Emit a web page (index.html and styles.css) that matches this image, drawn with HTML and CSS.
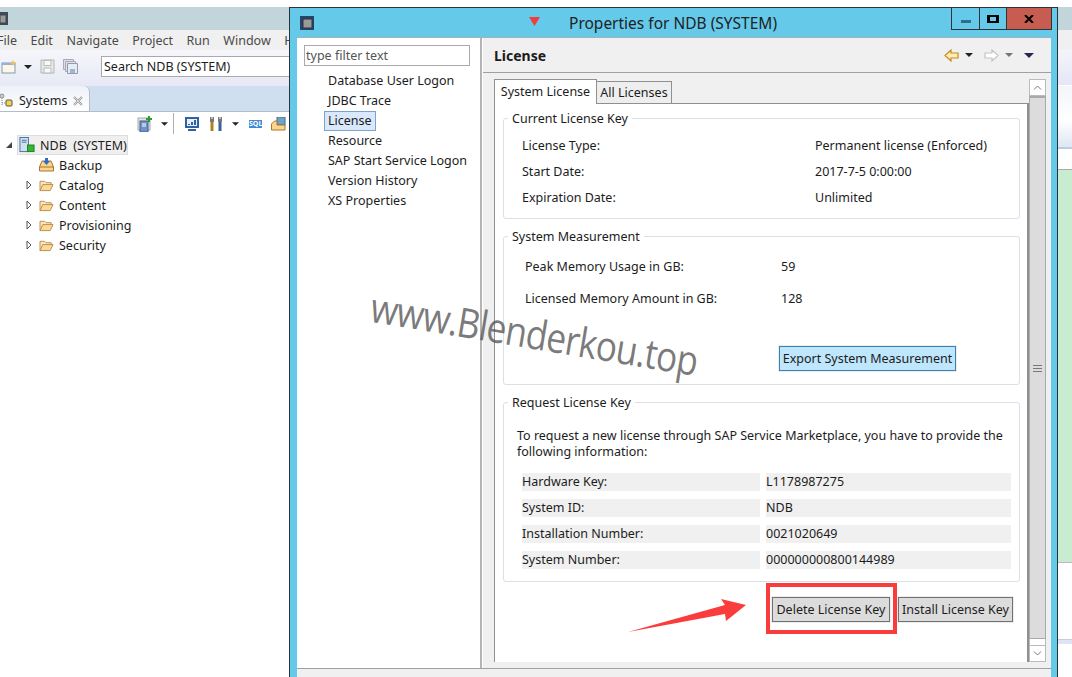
FILE: index.html
```html
<!DOCTYPE html>
<html lang="en">
<head>
    <meta charset="UTF-8">
    <title>Properties for NDB (SYSTEM)</title>
    <link rel="stylesheet" href="styles.css">
</head>
<body>
    <!-- Общие иконки -->
    <svg class="defs" width="0" height="0">
        <symbol id="folder" viewBox="0 0 16 14">
            <path d="M1 12.500V2.500h5l1.500 1.500H13v2" fill="#fbe6bd" stroke="#b98a45"/>
            <path d="M1 12.500L4 6h11l-3 6.500z" fill="#fcd999" stroke="#b98a45"/>
        </symbol>
        <symbol id="closed" viewBox="0 0 6 10">
            <path d="M1 1l4 4-4 4z" fill="#fff" stroke="#555"/>
        </symbol>
        <symbol id="drop" viewBox="0 0 8 4">
            <path d="M0 0h8L4 4z" fill="#222"/>
        </symbol>
    </svg>

    <div class="desktop">
        <!-- Главное окно слева -->
        <div class="studio">
            <div class="studio-title">
                <svg class="app-icon" width="8" height="13" viewBox="0 0 8 13"><rect width="8" height="13" fill="#3c4a5c"/><rect x="0" y="3" width="6" height="8" fill="#9a9a9a" stroke="#444"/></svg>
            </div>
            <div class="menu">
                <span>File</span><span>Edit</span><span>Navigate</span><span>Project</span><span>Run</span><span>Window</span><span>Help</span>
            </div>
            <div class="toolbar">
                <svg class="tool-new" width="16" height="14" viewBox="0 0 16 14"><rect x="1" y="3" width="13" height="10" fill="#fdf6e0" stroke="#7d9cc0"/><rect x="1" y="3" width="13" height="2" fill="#8fb3dc"/><path d="M12 0l1 2 2 1-2 1-1 2-1-2-2-1 2-1z" fill="#f2c14e"/></svg>
                <svg class="tool-drop" width="8" height="4"><use href="#drop"/></svg>
                <svg class="tool-save" width="15" height="15" viewBox="0 0 15 15"><path d="M1 1h13v13H1z" fill="#e8e8e8" stroke="#b5b5b5"/><path d="M4 1.500h7v5H4zM4 9h7v5H4z" fill="#f8f8f8" stroke="#bbb"/></svg>
                <svg class="tool-saveall" width="15" height="15" viewBox="0 0 15 15"><path d="M.5.500h10v10H.5z" fill="#dde" stroke="#aab"/><path d="M2.500 2.500h10v10h-10z" fill="#dde" stroke="#aab"/><path d="M4.500 4.500h10v10h-10z" fill="#e6ecf4" stroke="#99a"/><path d="M7 10h5v4H7z" fill="#9fb6d3"/></svg>
                <span class="tool-grip"></span>
                <span class="tool-dot"></span>
                <div class="search">Search NDB (SYSTEM)</div>
            </div>
            <div class="view-tabs">
                <div class="view-tab">
                    <svg width="13" height="15" viewBox="0 0 13 15"><circle cx="2" cy="3" r="2" fill="#ccc" stroke="#777" stroke-width=".7"/><path d="M2 5v8M2 10h4" stroke="#888" stroke-dasharray="1 1"/><rect x="6" y="7" width="6" height="6" rx="1" fill="#f3d34a" stroke="#555"/></svg>
                    <span class="view-name">Systems</span>
                    <svg class="view-close" width="10" height="10" viewBox="0 0 10 10"><path d="M1 1l8 8M9 1L1 9" stroke="#999" stroke-width="2"/><path d="M1 1l8 8M9 1L1 9" stroke="#fff" stroke-width=".6"/></svg>
                </div>
            </div>
            <div class="view-tools">
                <svg class="vt-add" width="16" height="16" viewBox="0 0 16 16"><rect x="1" y="2" width="12" height="12" fill="#e8e4da" stroke="#aaa"/><rect x="3" y="5" width="8" height="11" fill="#6f93c4" stroke="#3c5f95"/><path d="M5 8h4M5 10h4" stroke="#fff"/><path d="M12 0v6M9 3h6" stroke="#2c9b34" stroke-width="2"/></svg>
                <svg class="vt-drop" width="7" height="4"><use href="#drop"/></svg>
                <span class="vt-sep"></span>
                <svg class="vt-monitor" width="14" height="14" viewBox="0 0 14 14"><rect x="0" y="0" width="14" height="11" fill="#2d62a3"/><rect x="2" y="2" width="10" height="7" fill="#e8f0fa"/><path d="M4 8V7M7 8V5M10 8V3" stroke="#2d62a3" stroke-width="2"/><path d="M3 13h8" stroke="#2d62a3" stroke-width="2"/></svg>
                <svg class="vt-tools" width="18" height="14" viewBox="0 0 18 14"><path d="M1 0h1.500v2h1V0H5v5H1zM9 0h1.500v2h1V0H13v5H9z" fill="#777"/><path d="M1.500 5h3v9h-3z" fill="#ae8020"/><path d="M9.500 5h3v9h-3z" fill="#3c5f95"/></svg>
                <svg class="vt-drop2" width="7" height="4"><use href="#drop"/></svg>
                <span class="vt-sql">SQL</span>
                <svg class="vt-open" width="15" height="14" viewBox="0 0 15 14"><rect x="6" y="0" width="8" height="8" fill="#6fa4c4" stroke="#3c6f95"/><path d="M.5 13V7l3-3H6v4h8v5z" fill="#fbd58e" stroke="#a9762c"/></svg>
            </div>
            <div class="tree">
                <div class="tree-row tree-root">
                    <svg class="twist" width="6" height="6" viewBox="0 0 6 6"><path d="M6 0v6H0z" fill="#444"/></svg>
                    <div class="tree-selected">
                        <svg width="16" height="16" viewBox="0 0 17 16"><rect x="1" y="0" width="9" height="15" fill="#cfe0f2" stroke="#47709f"/><path d="M3 3h5M3 5h5" stroke="#47709f"/><rect x="9" y="8" width="7" height="7" fill="#36b336" stroke="#1c7f1c"/></svg>
                        <span>NDB &nbsp;(SYSTEM)</span>
                    </div>
                </div>
                <div class="tree-row tree-leaf">
                    <svg width="15" height="14" viewBox="0 0 15 14"><path d="M.5 9L3 3h9l2.500 6v4H.5z" fill="#fbd58e" stroke="#a9762c"/><path d="M.5 9h14" stroke="#a9762c"/><path d="M6 0h3v3h2L7.500 7 4 3h2z" fill="#2d6fc4"/></svg>
                    <span>Backup</span>
                </div>
                <div class="tree-row"><svg class="twist-closed" width="6" height="10"><use href="#closed"/></svg><svg width="15" height="13"><use href="#folder"/></svg><span>Catalog</span></div>
                <div class="tree-row"><svg class="twist-closed" width="6" height="10"><use href="#closed"/></svg><svg width="15" height="13"><use href="#folder"/></svg><span>Content</span></div>
                <div class="tree-row"><svg class="twist-closed" width="6" height="10"><use href="#closed"/></svg><svg width="15" height="13"><use href="#folder"/></svg><span>Provisioning</span></div>
                <div class="tree-row"><svg class="twist-closed" width="6" height="10"><use href="#closed"/></svg><svg width="15" height="13"><use href="#folder"/></svg><span>Security</span></div>
            </div>
        </div>

        <!-- Диалог свойств -->
        <div class="dialog">
            <div class="dialog-title">
                <svg class="app-icon-big" width="14" height="14" viewBox="0 0 14 14"><rect width="14" height="14" fill="#23466e"/><rect x="3" y="3" width="9" height="9" fill="#9a9a9a" stroke="#333"/></svg>
                <svg class="red-mark" width="11" height="9" viewBox="0 0 11 9"><path d="M0 0h11L5.500 9z" fill="#f33c3c"/></svg>
                <span class="dialog-name">Properties for NDB (SYSTEM)</span>
                <div class="win-buttons">
                    <div class="win-btn win-min"><span></span></div>
                    <div class="win-btn win-max"><span></span></div>
                    <div class="win-btn win-close">
                        <svg width="10" height="8" viewBox="0 0 10 8"><path d="M1 0l4 4 4-4M1 8l4-4 4 4" fill="none" stroke="#000" stroke-width="2"/></svg>
                    </div>
                </div>
            </div>
            <div class="dialog-panel">
                <div class="dialog-body">
                    <div class="nav">
                        <div class="filter">type filter text</div>
                        <div class="nav-item">Database User Logon</div>
                        <div class="nav-item">JDBC Trace</div>
                        <div class="nav-item"><span class="nav-selected">License</span></div>
                        <div class="nav-item">Resource</div>
                        <div class="nav-item">SAP Start Service Logon</div>
                        <div class="nav-item">Version History</div>
                        <div class="nav-item">XS Properties</div>
                    </div>
                    <div class="main">
                        <div class="main-head">
                            <span class="main-title">License</span>
                            <div class="history">
                                <svg width="15" height="13" viewBox="0 0 15 13"><path d="M1 6.500L7 1v3h7v5H7v3z" fill="#fdedb0" stroke="#c98a1e" stroke-width="1.200"/></svg>
                                <svg class="hist-drop" width="8" height="4"><use href="#drop"/></svg>
                                <svg width="15" height="13" viewBox="0 0 15 13"><path d="M14 6.500L8 1v3H1v5h7v3z" fill="#fff" stroke="#c4c4c4" stroke-width="1.200"/></svg>
                                <svg class="hist-drop hist-off" width="8" height="4"><use href="#drop"/></svg>
                                <svg class="hist-menu" width="10" height="5" viewBox="0 0 10 5"><path d="M0 0h10L5 5z" fill="#2c2350"/></svg>
                            </div>
                        </div>
                        <div class="main-content">
                            <div class="folder">
                                <div class="tabs">
                                    <div class="tab tab-active">System License</div>
                                    <div class="tab">All Licenses</div>
                                </div>
                                <div class="tab-body">
                                    <fieldset class="group group-current">
                                        <legend>Current License Key</legend>
                                        <div class="pairs pairs-wide"><span>License Type:</span><span>Permanent license (Enforced)</span></div>
                                        <div class="pairs pairs-wide"><span>Start Date:</span><span>2017-7-5 0:00:00</span></div>
                                        <div class="pairs pairs-wide"><span>Expiration Date:</span><span>Unlimited</span></div>
                                    </fieldset>
                                    <fieldset class="group group-measure">
                                        <legend>System Measurement</legend>
                                        <div class="pairs pairs-mem"><span>Peak Memory Usage in GB:</span><span>59</span></div>
                                        <div class="pairs pairs-mem"><span>Licensed Memory Amount in GB:</span><span>128</span></div>
                                        <button class="btn btn-export">Export System Measurement</button>
                                    </fieldset>
                                    <fieldset class="group group-request">
                                        <legend>Request License Key</legend>
                                        <p class="request-text">To request a new license through SAP Service Marketplace, you have to provide the following information:</p>
                                        <div class="info-row"><span>Hardware Key:</span><span>L1178987275</span></div>
                                        <div class="info-row"><span>System ID:</span><span>NDB</span></div>
                                        <div class="info-row"><span>Installation Number:</span><span>0021020649</span></div>
                                        <div class="info-row"><span>System Number:</span><span>000000000800144989</span></div>
                                    </fieldset>
                                    <div class="actions">
                                        <button class="btn">Delete License Key</button>
                                        <button class="btn">Install License Key</button>
                                    </div>
                                </div>
                            </div>
                            <div class="scrollbar">
                                <div class="scroll-btn"><svg width="9" height="5" viewBox="0 0 9 5"><path d="M1 4.500l3.500-3.500 3.500 3.500" fill="none" stroke="#777"/></svg></div>
                                <div class="scroll-track"><span class="grip"></span></div>
                                <div class="scroll-gap"></div>
                                <div class="scroll-btn scroll-down"><svg width="9" height="5" viewBox="0 0 9 5"><path d="M1 .5l3.500 3.500 3.500-3.500" fill="none" stroke="#777"/></svg></div>
                            </div>
                        </div>
                    </div>
                </div>
                <div class="dialog-foot"></div>
            </div>
        </div>

        <!-- Окно на заднем плане справа -->
        <div class="backdrop">
            <div class="bd-title"></div>
            <div class="bd-menu"></div>
            <div class="bd-tool"></div>
            <div class="bd-tool2"></div>
            <div class="bd-white"></div>
            <div class="bd-green"></div>
            <div class="bd-white2"></div>
            <div class="bd-lav"></div>
            <div class="bd-end"></div>
        </div>
    </div>

    <!-- Пометки поверх скриншота -->
    <div class="watermark">www.Blenderkou.top</div>
    <div class="red-box"></div>
    <svg class="red-arrow" width="120" height="36" viewBox="0 0 120 36"><path d="M0 34L97 7 93 1l25 6-20 16-1-7z" fill="#fb3c3c"/></svg>
</body>
</html>
```

FILE: styles.css
```css
/* Основные стили */
body {
    margin: 0;
    height: 677px;
    overflow: hidden;
    position: relative;
    background-color: #fff;
    color: #1c1c1c;
    font-family: "Noto Sans", Arial, sans-serif;
    font-size: 12.5px;
}

.defs {
    position: absolute;
}

.desktop {
    display: flex;
    height: 670px;
    padding-top: 7px;
}

svg {
    display: block;
    flex: none;
}

/* Главное окно */
.studio {
    width: 289px;
    flex: none;
    overflow: hidden;
    display: flex;
    flex-direction: column;
}

.studio-title {
    height: 23px;
    background-color: #c1d5da;
    display: flex;
    align-items: center;
}

.menu {
    height: 20px;
    background-color: #f0f0f0;
    color: #4a4a4a;
    display: flex;
    align-items: center;
    gap: 13.500px;
    margin-left: -3px;
    white-space: nowrap;
}

.toolbar {
    height: 33px;
    padding: 0 0 3px 1px;
    background: linear-gradient(#f6f6fb, #e6e9f5);
    display: flex;
    align-items: center;
}

.tool-drop {
    margin-left: 7px;
}

.tool-save {
    margin-left: 8px;
}

.tool-saveall {
    margin-left: 8px;
}

.tool-grip {
    width: 2px;
    height: 18px;
    margin-left: 5px;
    background: repeating-linear-gradient(#aaa 0 2px, transparent 2px 5px);
}

.tool-dot {
    width: 2px;
    height: 2px;
    margin: 10px 0 0 8px;
    background-color: #999;
}

.search {
    flex: none;
    width: 200px;
    height: 21px;
    line-height: 19px;
    box-sizing: border-box;
    margin-left: 10px;
    padding-left: 2px;
    background-color: #fff;
    border: 1px solid #aaa;
    white-space: nowrap;
}

.view-tabs {
    height: 25px;
    background-color: #cfdff0;
    border-bottom: 1px solid #b4bccb;
}

.view-tab {
    width: 90px;
    height: 25px;
    box-sizing: border-box;
    padding-top: 4px;
    background: linear-gradient(#eef1f8, #fff);
    border-radius: 0 6px 0 0;
    border-right: 1px solid #b4bccb;
    display: flex;
    align-items: center;
}

.view-name {
    margin-left: 6px;
}

.view-close {
    margin-left: 6px;
}

.view-tools {
    height: 23px;
    display: flex;
    align-items: center;
    padding-left: 137px;
}

.vt-drop {
    margin-left: 8px;
}

.vt-sep {
    width: 1px;
    height: 21px;
    margin-left: 5px;
    background-color: #b0b0b0;
}

.vt-monitor {
    margin-left: 11px;
}

.vt-tools {
    margin-left: 10px;
}

.vt-drop2 {
    margin-left: 5px;
}

.vt-sql {
    width: 13px;
    height: 8px;
    margin-left: 10px;
    background-color: #3f8bd4;
    color: #fff;
    font-size: 7px;
    font-weight: bold;
    line-height: 8px;
    text-align: center;
}

.vt-open {
    margin-left: 9px;
}

.tree {
    flex: 1;
    background-color: #fff;
}

.tree-row {
    height: 20px;
    display: flex;
    align-items: center;
    padding-left: 26px;
    white-space: nowrap;
}

.tree-row span {
    margin-left: 5px;
}

.twist-closed {
    margin-right: 7px;
}

.tree-root {
    padding-left: 6px;
}

.tree-selected {
    height: 20px;
    box-sizing: border-box;
    margin-left: 5px;
    padding: 0 1px;
    width: 111px;
    display: flex;
    align-items: center;
    background-color: #efefef;
    border: 1px solid #ddd;
}

.tree-leaf {
    padding-left: 39px;
}

/* Диалог */
.dialog {
    width: 769px;
    flex: none;
    box-sizing: border-box;
    background-color: #65c9ea;
    border: 1px solid #2b3338;
    border-bottom: none;
    display: flex;
    flex-direction: column;
}

.dialog-title {
    height: 29px;
    flex: none;
    position: relative;
    display: flex;
    align-items: center;
    padding-left: 10px;
}

.red-mark {
    margin: 0 0 2px 215px;
}

.dialog-name {
    margin-left: 29px;
    font-size: 15.500px;
    color: #222;
}

.win-buttons {
    position: absolute;
    top: 0;
    right: 5px;
    height: 21px;
    display: flex;
    border: 1px solid #333;
    border-top: none;
}

.win-btn {
    width: 27px;
    display: flex;
    align-items: center;
    justify-content: center;
    border-left: 1px solid #333;
}

.win-btn:first-child {
    border-left: none;
}

.win-max {
    width: 26px;
}

.win-min span {
    width: 10px;
    height: 3px;
    margin-top: 6px;
    background-color: #2f6f86;
}

.win-max span {
    width: 6px;
    height: 4px;
    border: 2px solid #000;
    border-width: 2px 3px;
}

.win-close {
    width: 44px;
    background-color: #c75c50;
}

.dialog-panel {
    flex: 1;
    min-height: 0;
    margin: 0 6px 0 7px;
    border-top: 1px solid #a5b0b8;
    background-color: #f0f0f0;
    display: flex;
    flex-direction: column;
}

.dialog-body {
    flex: 1;
    min-height: 0;
    display: flex;
}

.dialog-foot {
    height: 8px;
    flex: none;
    border-top: 1px solid #a0a0a0;
}

/* Левая навигация */
.nav {
    width: 183px;
    flex: none;
    background-color: #fff;
    border-right: 2px solid #b4b4b4;
}

.filter {
    width: 166px;
    height: 21px;
    box-sizing: border-box;
    margin: 7px 0 5px 7px;
    padding-left: 1px;
    line-height: 19px;
    color: #555;
    border: 1px solid #aaa;
}

.nav-item {
    height: 20px;
    line-height: 20px;
    padding-left: 31px;
    white-space: nowrap;
}

.nav-selected {
    display: inline-block;
    height: 20px;
    box-sizing: border-box;
    line-height: 18px;
    margin-left: -4px;
    padding: 0 3px;
    background-color: #d9e8fb;
    border: 1px solid #7da2ce;
}

/* Правая часть */
.main {
    flex: 1;
    min-width: 0;
    display: flex;
    flex-direction: column;
    border-left: 1px solid #fff;
}

.main-head {
    height: 34px;
    flex: none;
    display: flex;
    align-items: center;
    justify-content: space-between;
    padding: 0 17px 0 11px;
    border-bottom: 1px solid #a0a0a0;
}

.main-title {
    font-size: 14px;
    font-weight: bold;
}

.history {
    display: flex;
    align-items: center;
}

.hist-drop {
    margin: 0 11px 0 6px;
}

.hist-off {
    opacity: .6;
    margin-right: 0;
}

.hist-menu {
    margin-left: 11px;
}

.main-content {
    flex: 1;
    min-height: 0;
    display: flex;
    padding: 6px 5px 6px 11px;
}

.folder {
    flex: 1;
    min-width: 0;
    display: flex;
    flex-direction: column;
}

.tabs {
    height: 24px;
    flex: none;
    display: flex;
    align-items: flex-end;
}

.tab {
    width: 75px;
    height: 22px;
    box-sizing: border-box;
    line-height: 21px;
    text-align: center;
    background-color: #eee;
    border: 1px solid #909090;
    border-bottom: none;
    border-left: none;
}

.tab-active {
    width: 103px;
    height: 25px;
    margin-bottom: -1px;
    position: relative;
    line-height: 23px;
    background-color: #fff;
    border-left: 1px solid #909090;
}

.tab-body {
    flex: 1;
    background-color: #fff;
    border-top: 1px solid #909090;
    border-left: 1px solid #909090;
    border-right: 2px solid #909090;
    padding: 4px 7px 0 8px;
}

.group {
    margin: 0 0 7px;
    padding: 0;
    box-sizing: border-box;
    border: 1px solid #d8e0e8;
    border-radius: 3px;
    min-width: 0;
}

.group legend {
    margin-left: 4px;
    padding: 2px 4px 0;
    line-height: 18px;
}

.group-current {
    height: 111px;
    padding-top: 5px;
}

.group-measure {
    height: 159px;
    padding-top: 5px;
}

.group-request {
    height: 190px;
}

.pairs {
    display: flex;
    white-space: nowrap;
}

.pairs span:first-child {
    flex: none;
}

.pairs-wide {
    height: 26px;
    line-height: 26px;
    padding-left: 18px;
}

.pairs-wide span:first-child {
    width: 293px;
}

.pairs-mem {
    height: 32px;
    line-height: 32px;
    padding-left: 21px;
}

.pairs-mem span:first-child {
    width: 256px;
}

.btn {
    height: 25px;
    box-sizing: border-box;
    padding: 0;
    font: inherit;
    color: inherit;
    white-space: nowrap;
    background-color: #dcdcdc;
    border: 1px solid #707070;
    outline: 1px solid #eee;
}

.btn-export {
    display: block;
    width: 177px;
    margin: 31px 0 0 275px;
    background-color: #bee6fd;
    border-color: #3c7fb1;
}

.request-text {
    margin: 16px 13px 13px;
    line-height: 16px;
}

.info-row {
    display: flex;
    gap: 6px;
    height: 18px;
    line-height: 18px;
    margin: 0 8px 8px 18px;
    white-space: nowrap;
}

.info-row span {
    background-color: #f0f0f0;
}

.info-row span:first-child {
    width: 238px;
}

.info-row span:last-child {
    flex: 1;
}

.actions {
    display: flex;
    justify-content: flex-end;
    gap: 8px;
    margin: 15px 7px 0 0;
}

.actions .btn:first-child {
    width: 118px;
}

.actions .btn:last-child {
    width: 115px;
}

/* Полоса прокрутки */
.scrollbar {
    width: 17px;
    flex: none;
    display: flex;
    flex-direction: column;
}

.scroll-btn {
    height: 17px;
    flex: none;
    box-sizing: border-box;
    background-color: #fff;
    border: 1px solid #bbb;
    display: flex;
    align-items: center;
    justify-content: center;
}

.scroll-track {
    flex: 1;
    background-color: #dcdcdc;
    border: 1px solid #aaa;
    border-top-width: 2px;
    display: flex;
    align-items: center;
    justify-content: center;
}

.scroll-gap {
    height: 6px;
    flex: none;
    background-color: #fff;
    border: 1px solid #bbb;
    border-top: none;
    border-bottom: none;
}

.grip {
    width: 9px;
    height: 7px;
    background: repeating-linear-gradient(#777 0 1px, transparent 1px 3px);
}

/* Фон справа */
.backdrop {
    flex: 1;
    display: flex;
    flex-direction: column;
}

.bd-title {
    height: 23px;
    background-color: #c1d5da;
}

.bd-menu {
    height: 20px;
    background-color: #f0f0f0;
}

.bd-tool {
    height: 35px;
    background: linear-gradient(#f4f4fb, #e4e7f5);
}

.bd-tool2 {
    height: 61px;
    background: linear-gradient(#f4f5fa 0, #fff 55%, #dfe6f2 100%);
    border-top: 1px solid #fff;
    border-bottom: 2px solid #b6cfe6;
}

.bd-white {
    height: 20px;
    background-color: #fff;
    border-bottom: 1px solid #aaa;
}

.bd-green {
    height: 392px;
    background-color: #c8ecd0;
    border-bottom: 1px solid #bbb;
}

.bd-white2 {
    height: 76px;
    background-color: #fff;
    border-bottom: 1px solid #ccc;
}

.bd-lav {
    height: 4px;
    background-color: #dfe3f7;
}

.bd-end {
    flex: 1;
    background-color: #fff;
}

/* Водяной знак и красные пометки */
.watermark {
    position: absolute;
    left: 376px;
    top: 278px;
    font-family: "Open Sans", sans-serif;
    font-size: 41px;
    letter-spacing: -1px;
    color: rgba(80, 80, 80, .75);
    white-space: nowrap;
    transform: rotate(9.500deg) scaleX(.86);
    transform-origin: left top;
}

.red-box {
    position: absolute;
    left: 766px;
    top: 583px;
    width: 123px;
    height: 43px;
    border: 4px solid #fb3c3c;
}

.red-arrow {
    position: absolute;
    left: 628px;
    top: 598px;
}
```
